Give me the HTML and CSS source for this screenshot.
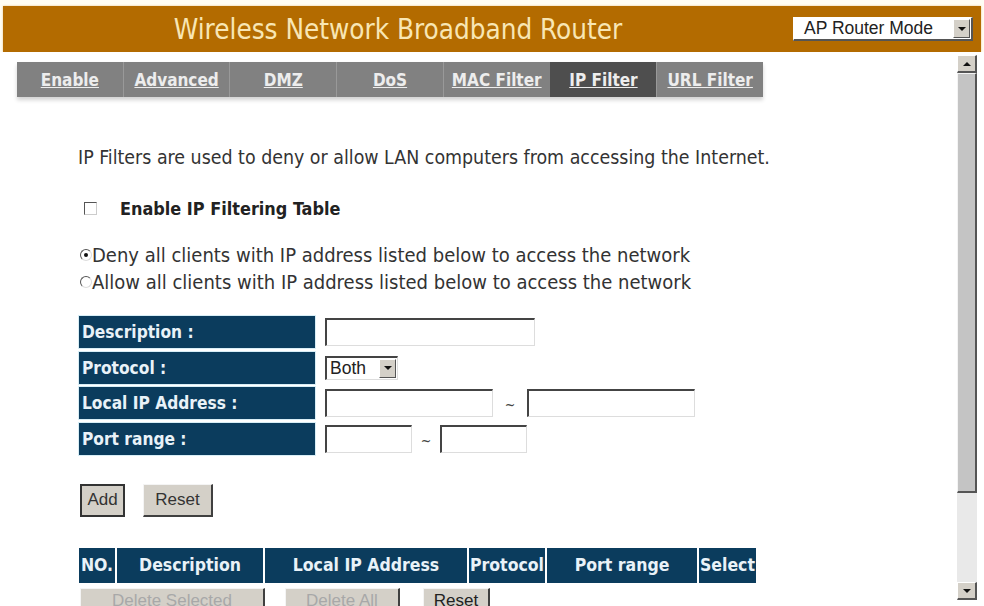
FILE: index.html
```html
<!DOCTYPE html>
<html>
<head>
<meta charset="utf-8">
<title>Wireless Network Broadband Router</title>
<link rel="stylesheet" href="styles.css">
</head>
<body>
<header class="topbar">
  <h1 class="title">Wireless Network Broadband Router</h1>
  <div class="mode-select">
    <span class="mode-text">AP Router Mode</span>
    <span class="drop-btn"><span class="tri"></span></span>
  </div>
</header>
<div class="frame">
  <main class="content">
    <nav class="tabs">
      <a class="tab">Enable</a>
      <a class="tab">Advanced</a>
      <a class="tab">DMZ</a>
      <a class="tab">DoS</a>
      <a class="tab">MAC Filter</a>
      <a class="tab active">IP Filter</a>
      <a class="tab">URL Filter</a>
    </nav>
    <section class="panel">
      <p class="intro">IP Filters are used to deny or allow LAN computers from accessing the Internet.</p>
      <div class="enable-row">
        <span class="checkbox"></span>
        <span class="enable-label">Enable IP Filtering Table</span>
      </div>
      <div class="radios">
        <div class="radio-row"><span class="radio checked"></span><span>Deny all clients with IP address listed below to access the network</span></div>
        <div class="radio-row"><span class="radio"></span><span>Allow all clients with IP address listed below to access the network</span></div>
      </div>
      <div class="form-grid">
        <div class="label">Description :</div>
        <div class="field"><span class="input w-desc"></span></div>
        <div class="label">Protocol :</div>
        <div class="field"><span class="select-small"><span class="sel-text">Both</span><span class="drop-btn small"><span class="tri"></span></span></span></div>
        <div class="label">Local IP Address :</div>
        <div class="field"><span class="input w-ip"></span><span class="tilde">~</span><span class="input w-ip"></span></div>
        <div class="label">Port range :</div>
        <div class="field"><span class="input w-port"></span><span class="tilde">~</span><span class="input w-port"></span></div>
      </div>
      <div class="actions">
        <span class="btn default">Add</span>
        <span class="btn w-reset">Reset</span>
      </div>
      <div class="list-head">
        <div class="th c-no">NO.</div>
        <div class="th c-desc">Description</div>
        <div class="th c-ip">Local IP Address</div>
        <div class="th c-proto">Protocol</div>
        <div class="th c-port">Port range</div>
        <div class="th c-sel">Select</div>
      </div>
      <div class="list-actions">
        <span class="btn disabled w-delsel">Delete Selected</span>
        <span class="btn disabled w-delall">Delete All</span>
        <span class="btn w-reset2">Reset</span>
      </div>
    </section>
  </main>
  <div class="scrollbar">
    <span class="sb-btn"><span class="tri up"></span></span>
    <span class="sb-thumb"></span>
    <span class="sb-track"></span>
    <span class="sb-btn"><span class="tri"></span></span>
  </div>
</div>
</body>
</html>
```
FILE: styles.css
```css
html, body {
  margin: 0;
  padding: 0;
  height: 606px;
  overflow: hidden;
  background: #fffdf4;
}
body {
  font-family: "DejaVu Sans Condensed", "DejaVu Sans", sans-serif;
  color: #333;
}
.topbar {
  display: flex;
  align-items: center;
  height: 46px;
  margin: 6px 3px 0 3px;
  background: #b36b00;
  box-shadow: 0 0 2px #e8c890;
}
.title {
  width: 790px;
  margin: 0;
  text-align: center;
  font-weight: normal;
  font-size: 27.6px;
  color: #f8e6b4;
}
.mode-select {
  display: flex;
  align-items: center;
  width: 180px;
  height: 24px;
  box-sizing: border-box;
  background: #fff;
  border: 1px solid #fff;
  border-right: 2px solid #555;
  border-bottom: 2px solid #555;
  font-family: "Liberation Sans", Arial, sans-serif;
  font-size: 17.5px;
  color: #222;
}
.mode-text {
  flex: 1;
  padding-left: 10px;
}
.drop-btn {
  display: flex;
  align-items: center;
  justify-content: center;
  width: 17px;
  height: 19px;
  margin-right: 1px;
  background: #d4d0c8;
  border-top: 1px solid #fff;
  border-left: 1px solid #fff;
  border-right: 1px solid #555;
  border-bottom: 1px solid #555;
  box-sizing: border-box;
}
.tri {
  width: 0;
  height: 0;
  border-left: 4px solid transparent;
  border-right: 4px solid transparent;
  border-top: 4px solid #111;
}
.tri.up {
  border-top: 0;
  border-bottom: 4px solid #111;
}
.frame {
  display: flex;
  height: 554px;
  background: #fff;
}
.content {
  flex: 1;
  padding: 10px 0 0 17px;
}
.tabs {
  display: flex;
  width: 746px;
  height: 35px;
  background: #818181;
  box-shadow: 0 3px 4px rgba(0, 0, 0, 0.18);
}
.tab {
  flex: 1;
  display: flex;
  align-items: center;
  justify-content: center;
  color: #ededed;
  font-weight: bold;
  font-size: 17px;
  text-decoration: underline;
  border-left: 1px solid #999;
}
.tab:first-child {
  border-left: 0;
}
.tab.active {
  background: #4e4e4e;
  border-left-color: #4e4e4e;
}
.panel {
  padding-left: 61px;
}
.intro {
  margin: 51px 0 0 0;
  line-height: 20px;
  font-size: 19.4px;
}
.enable-row {
  display: flex;
  align-items: center;
  height: 20px;
  margin-top: 30px;
}
.checkbox {
  width: 11px;
  height: 11px;
  margin-left: 6px;
  border-top: 1px solid #555;
  border-left: 1px solid #555;
  border-right: 1px solid #ccc;
  border-bottom: 1px solid #ccc;
  background: #fff;
}
.enable-label {
  margin-left: 23px;
  font-weight: bold;
  font-size: 17.9px;
  color: #222;
}
.radios {
  margin-top: 23px;
  font-size: 20px;
}
.radio-row {
  display: flex;
  align-items: center;
  height: 27px;
}
.radio {
  position: relative;
  width: 10px;
  height: 10px;
  margin: 0 0 0 2px;
  border-radius: 50%;
  border-top: 1px solid #555;
  border-left: 1px solid #555;
  border-right: 1px solid #ddd;
  border-bottom: 1px solid #ddd;
  background: #fff;
}
.radio.checked::after {
  content: "";
  position: absolute;
  left: 3px;
  top: 3px;
  width: 4px;
  height: 4px;
  border-radius: 50%;
  background: #111;
}
.form-grid {
  display: grid;
  grid-template-columns: 236px auto;
  grid-auto-rows: 32px;
  row-gap: 3.5px;
  margin-top: 21px;
  margin-left: 1px;
}
.label {
  display: flex;
  align-items: center;
  padding-left: 3px;
  background: #0b3c5d;
  color: #e9f2f8;
  font-weight: bold;
  font-size: 17.2px;
  box-shadow: 0 0 0 1px #d8eef6;
}
.field {
  display: flex;
  align-items: center;
  padding-left: 10px;
}
.input {
  display: block;
  height: 28px;
  box-sizing: border-box;
  background: #fff;
  border-top: 2px solid #444;
  border-left: 2px solid #444;
  border-right: 1px solid #ddd;
  border-bottom: 1px solid #ddd;
}
.w-desc { width: 210px; }
.w-ip { width: 168px; }
.w-port { width: 87px; }
.tilde {
  width: 34px;
  padding-top: 4px;
  text-align: center;
  font-size: 14px;
  color: #444;
}
.field .w-port + .tilde {
  width: 28px;
}
.select-small {
  display: flex;
  align-items: center;
  width: 73px;
  height: 24px;
  box-sizing: border-box;
  border-top: 2px solid #444;
  border-left: 2px solid #444;
  border-right: 1px solid #ddd;
  border-bottom: 1px solid #ddd;
  background: #fff;
  font-family: "Liberation Sans", Arial, sans-serif;
  font-size: 17.5px;
  color: #222;
}
.sel-text {
  flex: 1;
  padding-left: 3px;
}
.actions {
  display: flex;
  gap: 18px;
  margin-top: 29px;
  margin-left: 2px;
}
.btn {
  display: flex;
  align-items: center;
  justify-content: center;
  height: 33px;
  box-sizing: border-box;
  background: #d4d0c8;
  border-top: 1px solid #f4f4f4;
  border-left: 1px solid #f4f4f4;
  border-right: 2px solid #404040;
  border-bottom: 2px solid #404040;
  font-family: "Liberation Sans", Arial, sans-serif;
  font-size: 17px;
  color: #333;
}
.btn.default {
  width: 45px;
  border: 2px solid #333;
}
.w-reset { width: 70px; }
.list-head {
  display: flex;
  gap: 2px;
  height: 35px;
  margin-top: 31px;
  margin-left: 1px;
}
.th {
  display: flex;
  align-items: center;
  justify-content: center;
  background: #0b3c5d;
  color: #e9f2f8;
  font-weight: bold;
  font-size: 17.5px;
  white-space: nowrap;
  overflow: hidden;
}
.c-no { width: 36px; }
.c-desc { width: 146px; }
.c-ip { width: 202px; }
.c-proto { width: 76px; }
.c-port { width: 150px; }
.c-sel { width: 57px; }
.list-actions {
  display: flex;
  margin-top: 5px;
  margin-left: 2px;
}
.list-actions .btn {
  height: 28px;
}
.btn.disabled {
  color: #a8a8a8;
}
.w-delsel { width: 185px; }
.w-delall { width: 115px; margin-left: 20px; }
.w-reset2 { width: 67px; margin-left: 23px; color: #222; }
.scrollbar {
  display: flex;
  flex-direction: column;
  width: 20px;
  margin: 3px 7px 6px 0;
  background: #ececec;
}
.sb-btn {
  display: flex;
  align-items: center;
  justify-content: center;
  height: 18px;
  box-sizing: border-box;
  background: #d4d0c8;
  border-top: 1px solid #fff;
  border-left: 1px solid #fff;
  border-right: 2px solid #555;
  border-bottom: 2px solid #555;
}
.sb-thumb {
  height: 420px;
  box-sizing: border-box;
  background: #c4c4c4;
  border-top: 1px solid #f4f4f4;
  border-left: 1px solid #f4f4f4;
  border-right: 2px solid #555;
  border-bottom: 2px solid #555;
}
.sb-track {
  flex: 1;
  background: #e9e9e9;
}
```
